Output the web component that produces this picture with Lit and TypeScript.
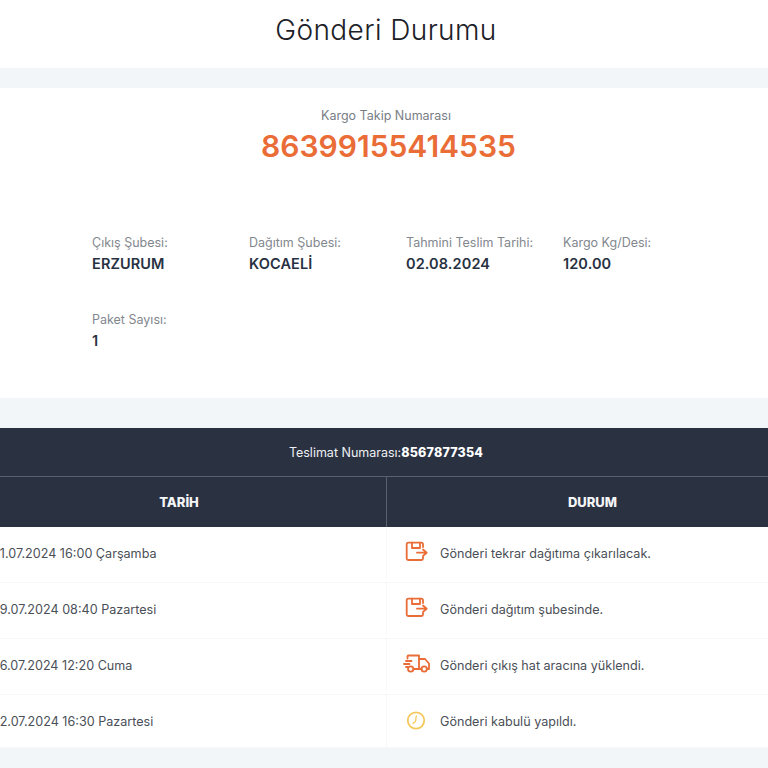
import { LitElement, html, css, svg } from 'lit';
import { customElement } from 'lit/decorators.js';

const boxIcon = svg`
  <path d="M18 5V2.200A1.500 1.500 0 0 0 16.500 0.700H3.200A1.500 1.500 0 0 0 1.700 2.200V16.500A1.500 1.500 0 0 0 3.200 18H16.500A1.500 1.500 0 0 0 18 16.500V15" />
  <path d="M7 0.700V6H15V0.700" />
  <path d="M12 10.700H21.500M18 7.500L21.700 10.700 18 13.900" />
`;

const truckIcon = svg`
  <path d="M2.500 4.500V2.500A1 1 0 0 1 3.500 1.500H14V15H8.500" />
  <path d="M14 5H20L24 9.500V15H22M14 15H16.500" />
  <circle cx="5.700" cy="15" r="2.700" />
  <circle cx="19.200" cy="15" r="2.700" />
  <path d="M1 7H6.500M-1 10H4.500M1 13H2.500" />
`;

const clockIcon = svg`
  <circle cx="11" cy="10.500" r="8.200" />
  <path d="M11.300 6L10.500 11.500 8 13.500" stroke-width="1.300" />
`;

const rows = [
  { date: '31.07.2024 16:00 Çarşamba', status: 'Gönderi tekrar dağıtıma çıkarılacak.', icon: boxIcon, color: '#ea6c36' },
  { date: '29.07.2024 08:40 Pazartesi', status: 'Gönderi dağıtım şubesinde.', icon: boxIcon, color: '#ea6c36' },
  { date: '26.07.2024 12:20 Cuma', status: 'Gönderi çıkış hat aracına yüklendi.', icon: truckIcon, color: '#ea6c36' },
  { date: '22.07.2024 16:30 Pazartesi', status: 'Gönderi kabulü yapıldı.', icon: clockIcon, color: '#f5c85c' },
];

const fields = [
  { label: 'Çıkış Şubesi:', value: 'ERZURUM' },
  { label: 'Dağıtım Şubesi:', value: 'KOCAELİ' },
  { label: 'Tahmini Teslim Tarihi:', value: '02.08.2024' },
  { label: 'Kargo Kg/Desi:', value: '120.00' },
  { label: 'Paket Sayısı:', value: '1' },
];

@customElement('app-root')
export class AppRoot extends LitElement {

  static styles = css`
    :host {
      display: block;
      height: 768px;
      overflow: hidden;
      background-color: #f3f6f9;
      font-family: Inter, "Noto Sans", sans-serif;
      color: #273142;
    }

    .title {
      height: 68px;
      display: flex;
      align-items: center;
      justify-content: center;
      margin: 0 0 20px;
      padding: 0 0 8px 4px;
      box-sizing: border-box;
      background-color: #fff;
      font-size: 28px;
      font-weight: 300;
      letter-spacing: 0.4px;
      color: #1c2128;
    }

    .card {
      height: 310px;
      margin-bottom: 30px;
      padding-top: 20px;
      box-sizing: border-box;
      background-color: #fff;
    }

    .track-label {
      padding-left: 4px;
      text-align: center;
      font-size: 12.500px;
      line-height: 16px;
      color: #777d85;
    }

    .track-number {
      padding-left: 9px;
      text-align: center;
      font-size: 30px;
      line-height: 40px;
      margin-top: 2px;
      font-weight: 600;
      color: #ea6c36;
    }

    .fields {
      display: grid;
      grid-template-columns: repeat(4, 157px);
      grid-auto-rows: 77px;
      margin: 69px 0 0 92px;
    }

    .field-label {
      font-size: 12.500px;
      line-height: 16px;
      color: #82878e;
    }

    .field-value {
      margin-top: 3px;
      font-size: 14.500px;
      line-height: 20px;
      font-weight: 600;
      letter-spacing: 0.1px;
      color: #273142;
    }

    .table {
      margin: 0 -30px 0 -28px;
    }

    .delivery {
      height: 49px;
      display: flex;
      align-items: center;
      justify-content: center;
      padding-left: 2px;
      box-sizing: border-box;
      border-bottom: 1px solid #59616f;
      background-color: #2a3242;
      font-size: 12.500px;
      color: #eef0f3;
    }

    .delivery b {
      font-weight: 800;
      letter-spacing: 0.2px;
      color: #fff;
    }

    .head {
      height: 50px;
      display: grid;
      grid-template-columns: 414px 1fr;
      background-color: #2a3242;
      font-size: 13px;
      font-weight: 800;
      color: #f4f5f7;
    }

    .head div {
      display: flex;
      align-items: center;
      justify-content: center;
    }

    .head div + div {
      border-left: 1px solid #59616f;
    }

    .row {
      height: 56px;
      padding-bottom: 4px;
      box-sizing: border-box;
      display: grid;
      grid-template-columns: 414px 1fr;
      background-color: #fff;
      font-size: 12.600px;
      color: #4a4f57;
      box-shadow: inset 0 -1px 0 #f6f7f9;
    }

    .row:last-child {
      height: 53px;
      padding-bottom: 1px;
    }

    .date {
      display: flex;
      align-items: center;
      padding-left: 20px;
    }

    .status {
      display: flex;
      align-items: center;
      gap: 11px;
      padding-left: 19px;
      box-shadow: inset 1px 0 0 #f6f7f9;
    }

    svg {
      width: 24px;
      height: 22px;
      overflow: visible;
      fill: none;
      stroke-width: 1.800;
      stroke-linecap: round;
      stroke-linejoin: round;
    }
  `;

  render() {
    return html`
      <div class="title">Gönderi Durumu</div>
      <section class="card">
        <div class="track-label">Kargo Takip Numarası</div>
        <div class="track-number">86399155414535</div>
        <div class="fields">
          ${fields.map(f => html`
            <div>
              <div class="field-label">${f.label}</div>
              <div class="field-value">${f.value}</div>
            </div>
          `)}
        </div>
      </section>
      <section class="table">
        <div class="delivery">Teslimat Numarası:<b>8567877354</b></div>
        <div class="head">
          <div>TARİH</div>
          <div>DURUM</div>
        </div>
        ${rows.map(r => html`
          <div class="row">
            <div class="date">${r.date}</div>
            <div class="status">
              <svg viewBox="0 0 24 22" style="stroke: ${r.color}">${r.icon}</svg>
              <span>${r.status}</span>
            </div>
          </div>
        `)}
      </section>
    `;
  }

}
